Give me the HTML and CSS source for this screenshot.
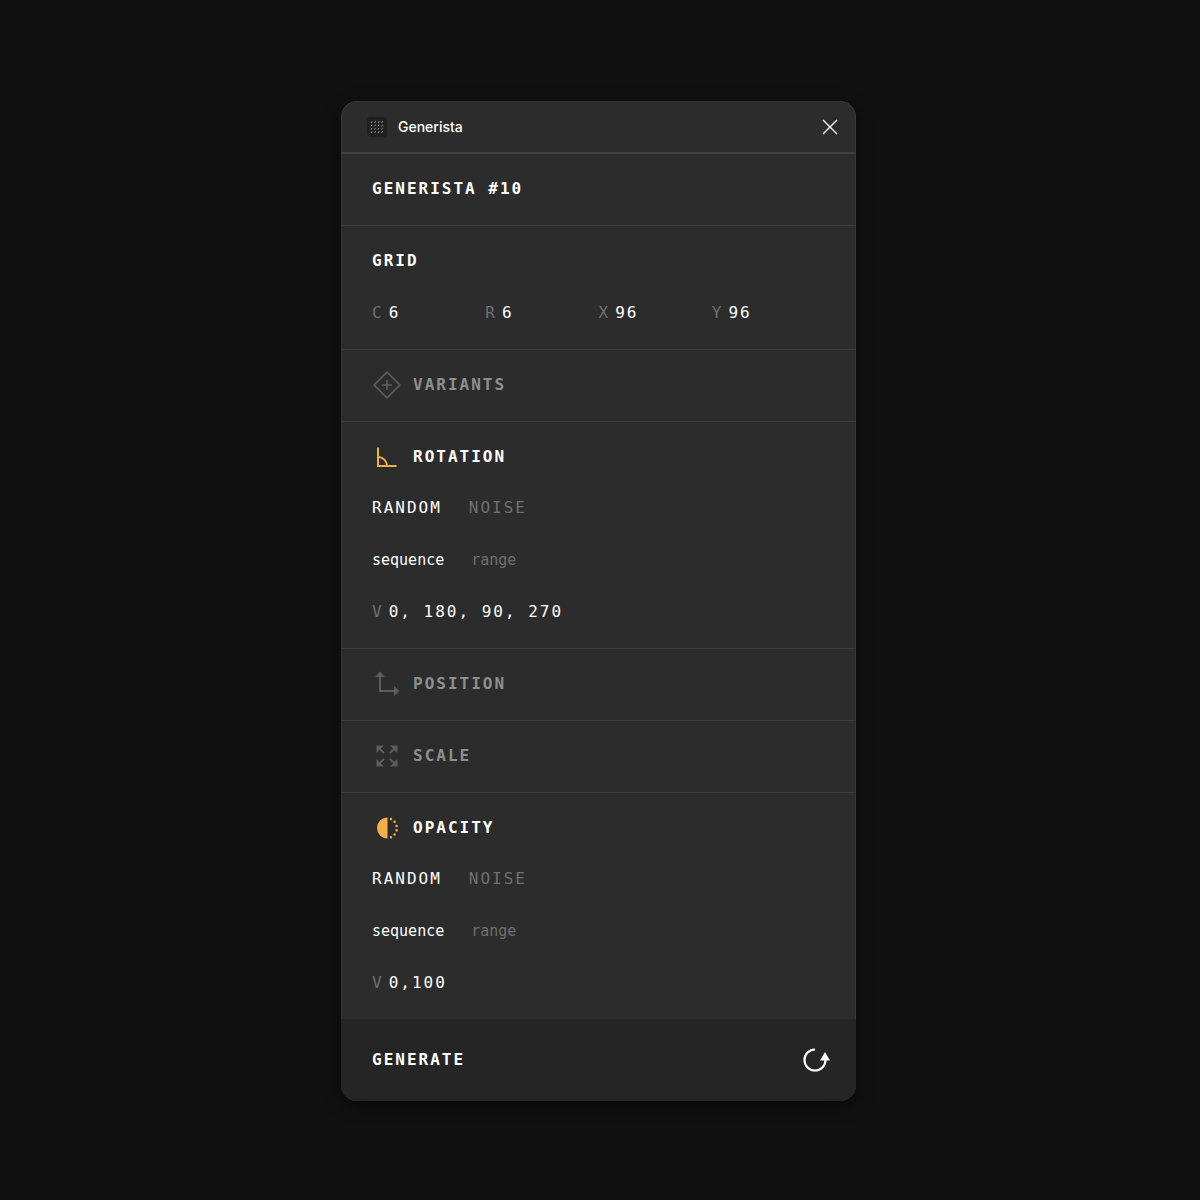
FILE: index.html
```html
<!DOCTYPE html>
<html lang="en">
<head>
<meta charset="utf-8">
<meta name="viewport" content="width=device-width, initial-scale=1">
<title>Generista</title>
<link rel="stylesheet" href="styles.css">
</head>
<body>
<main class="panel">
  <header class="titlebar">
    <svg class="logo" viewBox="0 0 20 20" aria-hidden="true">
      <rect width="20" height="20" rx="4" fill="#1f1f1f"/>
      <path d="M4 6l1.200-1.800M7.500 6l1.200-1.800M11 6l1.200-1.800M14.500 6l1.200-1.800M4 9.300l1.200-1.800M7.500 9.300l1.200-1.800M11 9.300l1.200-1.800M14.500 9.300l1.200-1.800M4 12.600l1.200-1.800M7.500 12.600l1.200-1.800M11 12.600l1.200-1.800M14.500 12.600l1.200-1.800M4 16l1.200-1.800M7.500 16l1.200-1.800M11 16l1.200-1.800M14.500 16l1.200-1.800" stroke="#a5a5a5" stroke-width=".9"/>
    </svg>
    <span class="app-name">Generista</span>
    <button class="close" type="button" aria-label="Close">
      <svg viewBox="0 0 16 16" aria-hidden="true"><path d="M1 1l14 14M15 1L1 15" stroke="#fff" stroke-width="1.400" fill="none"/></svg>
    </button>
  </header>

  <section class="section">
    <h1 class="heading">GENERISTA #10</h1>
  </section>

  <section class="section">
    <h2 class="heading">GRID</h2>
    <div class="grid-fields">
      <div class="field"><label for="cols">C</label><input id="cols" value="6"></div>
      <div class="field"><label for="rows">R</label><input id="rows" value="6"></div>
      <div class="field"><label for="gap-x">X</label><input id="gap-x" value="96"></div>
      <div class="field"><label for="gap-y">Y</label><input id="gap-y" value="96"></div>
    </div>
  </section>

  <section class="section">
    <h2 class="heading"><button class="toggle" type="button">
      <svg class="icon" viewBox="0 0 30 30" aria-hidden="true"><path d="M15 2.200L27.800 15L15 27.800L2.200 15ZM15 10v10M10 15h10" stroke="#5c5c5c" stroke-width="1.700" fill="none"/></svg>
      VARIANTS</button></h2>
  </section>

  <section class="section">
    <h2 class="heading"><button class="toggle on" type="button">
      <svg class="icon" viewBox="0 0 30 30" aria-hidden="true"><path d="M6 5.500V24h18.500M6 15a9 9 0 0 1 9 9" stroke="#efb04a" stroke-width="2" fill="none"/></svg>
      ROTATION</button></h2>
    <div class="options">
      <div class="choices">
        <label class="mode"><input type="radio" name="rot-mode" checked><span>RANDOM</span></label>
        <label class="mode"><input type="radio" name="rot-mode"><span>NOISE</span></label>
      </div>
      <div class="choices">
        <label class="kind"><input type="radio" name="rot-kind" checked><span>sequence</span></label>
        <label class="kind"><input type="radio" name="rot-kind"><span>range</span></label>
      </div>
      <div class="field"><label for="rot-v">V</label><input id="rot-v" value="0, 180, 90, 270"></div>
    </div>
  </section>

  <section class="section">
    <h2 class="heading"><button class="toggle" type="button">
      <svg class="icon" viewBox="0 0 30 30" aria-hidden="true"><path d="M8 6v16h16" stroke="#5c5c5c" stroke-width="2" fill="none"/><path d="M8 2.500l5 5.500H3ZM27.500 22L22 17v10Z" fill="#5c5c5c"/></svg>
      POSITION</button></h2>
  </section>

  <section class="section">
    <h2 class="heading"><button class="toggle" type="button">
      <svg class="icon" viewBox="0 0 30 30" aria-hidden="true"><path d="M7 7l5 5M23 7l-5 5M7 23l5-5M23 23l-5-5" stroke="#5c5c5c" stroke-width="2"/><path d="M4.500 4.500h7.500l-7.500 7.500ZM25.500 4.500h-7.500l7.500 7.500ZM4.500 25.500h7.500l-7.500-7.500ZM25.500 25.500h-7.500l7.500-7.500Z" fill="#5c5c5c"/></svg>
      SCALE</button></h2>
  </section>

  <section class="section">
    <h2 class="heading"><button class="toggle on" type="button">
      <svg class="icon" viewBox="0 0 30 30" aria-hidden="true"><path d="M15.500 4.500A10.500 10.500 0 0 0 15.500 25.500Z" fill="#f3ae4c"/><path d="M19 5.900h.01M22.600 8.800h.01M24.600 12.900h.01M24.600 17.300h.01M22.600 21.400h.01M19 24.300h.01" stroke="#f3ae4c" stroke-width="2.500" stroke-linecap="round"/></svg>
      OPACITY</button></h2>
    <div class="options">
      <div class="choices">
        <label class="mode"><input type="radio" name="op-mode" checked><span>RANDOM</span></label>
        <label class="mode"><input type="radio" name="op-mode"><span>NOISE</span></label>
      </div>
      <div class="choices">
        <label class="kind"><input type="radio" name="op-kind" checked><span>sequence</span></label>
        <label class="kind"><input type="radio" name="op-kind"><span>range</span></label>
      </div>
      <div class="field"><label for="op-v">V</label><input id="op-v" value="0,100"></div>
    </div>
  </section>

  <button class="generate" type="button">
    GENERATE
    <svg viewBox="0 0 30 28" aria-hidden="true"><path d="M14 3.500A10.500 10.500 0 1 0 24.500 14" stroke="#fff" stroke-width="2.200" fill="none"/><path d="M24 6l5 8.500H19Z" fill="#fff"/></svg>
  </button>
</main>
</body>
</html>
```
FILE: styles.css
```css
* {
  box-sizing: border-box;
}

body {
  margin: 0;
  min-height: 100vh;
  padding: 101px 0 99px;
  display: grid;
  grid-template-columns: 341fr minmax(0, 515px) 344fr;
  align-items: start;
  background: #111;
  color: #fff;
  font: 500 16px/24px "DejaVu Sans Mono", monospace;
}

button,
input {
  margin: 0;
  padding: 0;
  border: 0;
  background: none;
  color: inherit;
  font: inherit;
  letter-spacing: inherit;
}

button {
  cursor: pointer;
}

.panel {
  grid-column: 2;
  overflow: hidden;
  border-radius: 16px;
  background: #2c2c2c;
  box-shadow: inset 0 0 0 1px #363636, 0 4px 16px #0008;
}

.titlebar {
  display: flex;
  align-items: center;
  height: 53px;
  padding: 0 18px 0 26px;
  border-bottom: 2px solid #404040;
}

.logo {
  width: 20px;
  height: 20px;
}

.app-name {
  margin-left: 11px;
  font: 500 14px/24px Inter, sans-serif;
}

.close {
  display: flex;
  margin-left: auto;
}

.close svg {
  width: 16px;
  height: 16px;
}

.section {
  padding: 23px 31px 24px;
  border-bottom: 1px solid #3c3c3c;
}

.section:last-of-type {
  border-bottom: 0;
}

.heading {
  margin: 0;
  font-size: 16px;
  font-weight: 700;
  line-height: 24px;
  letter-spacing: 2px;
}

.toggle {
  display: flex;
  align-items: center;
  gap: 11px;
  height: 24px;
  color: #8f8f8f;
}

.toggle.on {
  color: #fff;
}

.icon {
  width: 30px;
  height: 30px;
}

.grid-fields {
  display: grid;
  grid-template-columns: repeat(4, minmax(0, 1fr));
  margin-top: 28px;
}

.field {
  display: flex;
  gap: 7px;
  letter-spacing: 2px;
}

.field label {
  color: #707070;
  letter-spacing: 0;
}

.field input {
  flex: 1;
  min-width: 0;
  height: 24px;
}

.options {
  display: grid;
  gap: 28px;
  margin-top: 27px;
}

.choices {
  display: flex;
  gap: 27px;
}

.choices input {
  position: absolute;
  opacity: 0;
}

.choices span {
  color: #707070;
}

.choices input:checked + span {
  color: #fff;
}

.mode {
  letter-spacing: 2px;
}

.kind {
  font-size: 15px;
}

.generate {
  display: flex;
  align-items: center;
  justify-content: space-between;
  width: 100%;
  height: 82px;
  padding: 0 25px 0 31px;
  background: #252525;
  font-weight: 700;
  letter-spacing: 2px;
}

.generate svg {
  width: 30px;
  height: 28px;
}
```
